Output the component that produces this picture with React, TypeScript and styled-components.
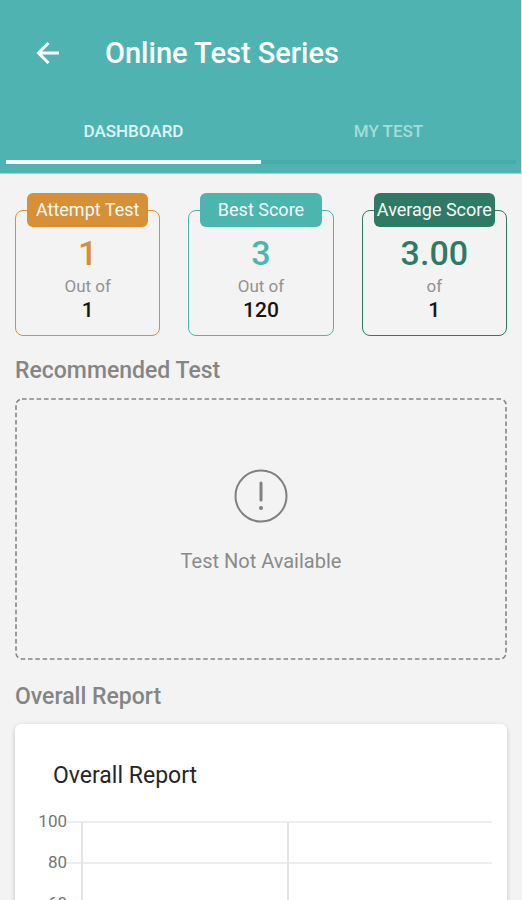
import React from "react";
import styled, { createGlobalStyle } from "styled-components";

const GlobalStyle = createGlobalStyle`
  *, *::before, *::after { box-sizing: border-box; }
  body {
    margin: 0;
    background: #f3f3f3;
    font-family: Roboto, "Liberation Sans", sans-serif;
  }
`;

const Screen = styled.div`
  display: flex;
  flex-direction: column;
  height: 100vh;
  background: #f3f3f3;
`;

const Header = styled.header`
  flex: none;
  padding: 25px 5px 9px 6px;
  background: #4fb4b1;
  border-right: 1px solid #d5e9e8;
  border-bottom: 1px solid #a3d3d1;
`;

const AppBar = styled.div`
  display: flex;
  align-items: center;
  gap: 42px;
  height: 56px;
  padding-left: 25px;
`;

const BackButton = styled.button`
  display: flex;
  align-items: center;
  justify-content: center;
  width: 32px;
  height: 32px;
  padding: 0;
  border: 0;
  background: none;
  color: #fff;
  cursor: pointer;
`;

const Title = styled.h1`
  margin: 0;
  color: #fff;
  font-size: 29px;
  font-weight: 500;
  line-height: 36px;
`;

const Tabs = styled.div`
  display: grid;
  grid-template-columns: 1fr 1fr;
  margin-top: 19px;
`;

const Tab = styled.button<{ $active?: boolean }>`
  height: 64px;
  padding: 2px 0 0;
  border: 0;
  border-bottom: ${(p) => (p.$active ? "4px solid #fff" : "4px solid #46adaa")};
  background: none;
  color: ${(p) => (p.$active ? "#dcf6f6" : "#a4dcda")};
  font: 500 17px/20px Roboto, "Liberation Sans", sans-serif;
  cursor: pointer;
`;

const Content = styled.main`
  flex: 1;
  min-height: 0;
  padding: 19px 15px 24px;
  overflow-y: auto;
  scrollbar-width: none;
`;

const Stats = styled.div`
  display: grid;
  grid-template-columns: repeat(3, 1fr);
  gap: 28px;
  padding-top: 17px;
`;

const StatCard = styled.section<{ $color: string }>`
  display: flex;
  flex-direction: column;
  align-items: center;
  height: 126px;
  padding: 0 11px;
  border: 1px solid ${(p) => p.$color};
  border-radius: 8px;
`;

const StatLabel = styled.h2<{ $color: string }>`
  align-self: stretch;
  flex: none;
  margin: -18px 0 0;
  border-radius: 6px;
  background: ${(p) => p.$color};
  color: #f3fafa;
  font-size: 18px;
  font-weight: 400;
  line-height: 34px;
  text-align: center;
  white-space: nowrap;
`;

const StatValue = styled.strong<{ $color: string }>`
  margin-top: 6px;
  color: ${(p) => p.$color};
  font-size: 34px;
  font-weight: 500;
  line-height: 40px;
`;

const StatCaption = styled.span`
  margin-top: 3px;
  color: #929292;
  font-size: 17px;
  line-height: 20px;
`;

const StatTotal = styled.span`
  margin-top: 2px;
  color: #151515;
  font-size: 21px;
  font-weight: 500;
  line-height: 24px;
`;

const SectionTitle = styled.h2`
  margin: 21px 0 13px;
  color: #858585;
  font-size: 23px;
  font-weight: 500;
  line-height: 28px;
`;

const EmptyBox = styled.section`
  position: relative;
  display: flex;
  flex-direction: column;
  align-items: center;
  height: 262px;
  margin-bottom: 23px;
  padding-top: 70px;
`;

const DashedOutline = styled.svg`
  position: absolute;
  inset: 0;
  width: 100%;
  height: 100%;
  pointer-events: none;

  rect {
    width: calc(100% - 2px);
    height: calc(100% - 2px);
  }
`;

const EmptyText = styled.p`
  margin: 25px 0 0;
  color: #8a8a8a;
  font-size: 20px;
  line-height: 24px;
`;

const ReportCard = styled.section`
  padding: 38px 15px 24px 22px;
  border-radius: 6px;
  background: #fff;
  box-shadow: 0 2px 5px rgba(0, 0, 0, 0.2);
`;

const ReportTitle = styled.h3`
  margin: 0 0 21px 16px;
  color: #262626;
  font-size: 23px;
  font-weight: 400;
  line-height: 28px;
`;

const Chart = styled.div`
  display: flex;
`;

const AxisLabels = styled.div`
  flex: none;
  width: 30px;
  color: #757575;
  font-size: 17px;
  line-height: 20px;
  text-align: right;
`;

const AxisLabel = styled.div`
  height: 41px;
`;

const Plot = styled.svg`
  flex: 1;
  min-width: 0;
  height: 220px;
`;

const stats = [
  { label: "Attempt Test", value: "1", caption: "Out of", total: "1", color: "#d79036" },
  { label: "Best Score", value: "3", caption: "Out of", total: "120", color: "#4cb5ae" },
  { label: "Average Score", value: "3.00", caption: "of", total: "1", color: "#2f7a65" },
];

const ticks = [100, 80, 60, 40, 20];

export default function App() {
  return (
    <>
      <GlobalStyle />
      <Screen>
        <Header>
          <AppBar>
            <BackButton aria-label="Back">
              <svg width="26" height="26" viewBox="0 0 26 26" fill="none" stroke="currentColor" strokeWidth="3">
                <path d="M25 13H5M14.5 3L4.5 13L14.5 23" />
              </svg>
            </BackButton>
            <Title>Online Test Series</Title>
          </AppBar>
          <Tabs role="tablist">
            <Tab role="tab" aria-selected="true" $active>DASHBOARD</Tab>
            <Tab role="tab" aria-selected="false">MY TEST</Tab>
          </Tabs>
        </Header>
        <Content>
          <Stats>
            {stats.map((s) => (
              <StatCard key={s.label} $color={s.color}>
                <StatLabel $color={s.color}>{s.label}</StatLabel>
                <StatValue $color={s.color}>{s.value}</StatValue>
                <StatCaption>{s.caption}</StatCaption>
                <StatTotal>{s.total}</StatTotal>
              </StatCard>
            ))}
          </Stats>
          <SectionTitle>Recommended Test</SectionTitle>
          <EmptyBox>
            <DashedOutline aria-hidden="true">
              <rect x="1" y="1" rx="6" fill="none" stroke="#858585" strokeWidth="1.6" strokeDasharray="4.6 2.7" />
            </DashedOutline>
            <svg width="56" height="56" viewBox="0 0 56 56" fill="none" stroke="#808080" strokeWidth="2" aria-hidden="true">
              <circle cx="28" cy="28" r="25.5" />
              <path d="M28 15V32" strokeWidth="3" strokeLinecap="round" />
              <circle cx="28" cy="40" r="2" fill="#808080" stroke="none" />
            </svg>
            <EmptyText>Test Not Available</EmptyText>
          </EmptyBox>
          <SectionTitle>Overall Report</SectionTitle>
          <ReportCard>
            <ReportTitle>Overall Report</ReportTitle>
            <Chart>
              <AxisLabels>
                {ticks.map((t) => (
                  <AxisLabel key={t}>{t}</AxisLabel>
                ))}
              </AxisLabels>
              <Plot aria-hidden="true" stroke="#eeeeee" strokeWidth="2">
                {ticks.map((t, i) => (
                  <line key={t} x1="0" x2="100%" y1={11 + i * 41} y2={11 + i * 41} />
                ))}
                <g stroke="#e4e4e4">
                  <line x1="15" x2="15" y1="11" y2="100%" />
                  <line x1="52%" x2="52%" y1="11" y2="100%" />
                </g>
              </Plot>
            </Chart>
          </ReportCard>
        </Content>
      </Screen>
    </>
  );
}
